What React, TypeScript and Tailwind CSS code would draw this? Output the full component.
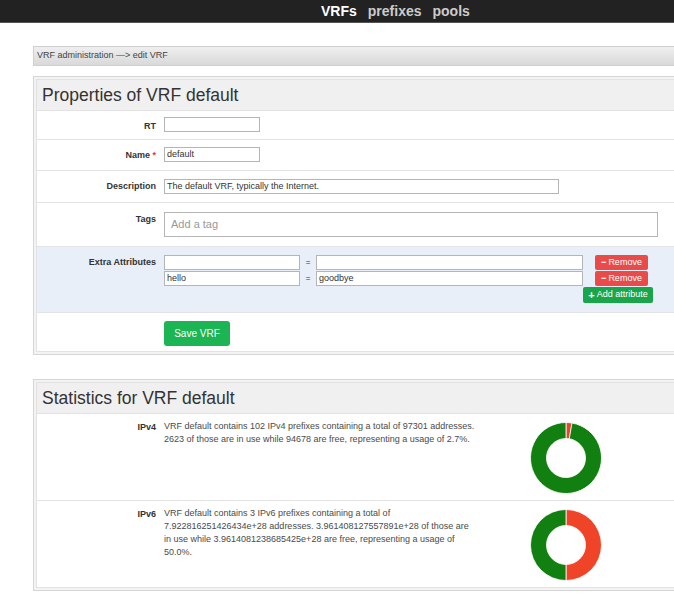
import React from 'react';

type Slice = { from: number; to: number; color: string };

function arcPath(cx: number, cy: number, r0: number, r1: number, a0: number, a1: number) {
  const pt = (r: number, a: number) => {
    const t = a * Math.PI * 2 - Math.PI / 2;
    return [cx + r * Math.cos(t), cy + r * Math.sin(t)];
  };
  const large = a1 - a0 > 0.5 ? 1 : 0;
  const [x0, y0] = pt(r1, a0);
  const [x1, y1] = pt(r1, a1);
  const [x2, y2] = pt(r0, a1);
  const [x3, y3] = pt(r0, a0);
  return `M${x0} ${y0} A${r1} ${r1} 0 ${large} 1 ${x1} ${y1} L${x2} ${y2} A${r0} ${r0} 0 ${large} 0 ${x3} ${y3} Z`;
}

function Donut({ slices }: { slices: Slice[] }) {
  return (
    <svg width="72" height="72" viewBox="0 0 72 72">
      {slices.map((s, i) => (
        <path key={i} d={arcPath(36, 36, 19.5, 35.5, s.from, s.to)} fill={s.color} stroke="#fff" strokeWidth="0.8" />
      ))}
    </svg>
  );
}

function Field({ className = '', value = '', placeholder }: { className?: string; value?: string; placeholder?: string }) {
  return (
    <div className={`border border-[#b5b5b5] bg-white flex items-center px-[2px] text-[9px] text-[#333] ${className}`}>
      {value ? value : <span className="text-[#999] text-[11px] pl-[4px]">{placeholder}</span>}
    </div>
  );
}

function Row({ label, children, className = '', labelClass = '' }: { label?: React.ReactNode; children: React.ReactNode; className?: string; labelClass?: string }) {
  return (
    <div className={`flex border-t border-[#e3e3e3] ${className}`}>
      <div className={`w-[119px] shrink-0 text-right text-[9px] font-bold text-[#333] ${labelClass}`}>{label}</div>
      <div className="pl-[8px] flex-1">{children}</div>
    </div>
  );
}

function Panel({ title, children }: { title: string; children: React.ReactNode }) {
  return (
    <div className="w-[660px] border border-[#d6d6d6] bg-[#f3f3f3] p-[2px]">
      <div className="border border-[#e2e2e2] bg-white">
        <div className="h-[31px] bg-[#f0f0f0] flex items-center pl-[5px] text-[17.5px] text-[#333]">{title}</div>
        {children}
      </div>
    </div>
  );
}

export default function App() {
  return (
    <div className="w-[674px] h-[600px] overflow-hidden bg-white font-['Liberation_Sans',Arial,sans-serif] text-[#333]">
      <div className="h-[23px] bg-[#222] border-b border-[#555] flex items-center pl-[321px] gap-[11px] text-[14px] font-bold">
        <span className="text-white">VRFs</span>
        <span className="text-[#ccc]">prefixes</span>
        <span className="text-[#ccc]">pools</span>
      </div>

      <div className="ml-[33px] mt-[23px]">
        <div className="w-[660px] h-[20px] bg-gradient-to-b from-[#efefef] to-[#d9d9d9] border border-[#d0d0d0] flex items-center pl-[3px] text-[9px] text-[#444]">
          VRF administration —&gt; edit VRF
        </div>

        <div className="mt-[10px]">
          <Panel title="Properties of VRF default">
            <div className="-mt-px">
              <Row label="RT" className="h-[29px] pt-[6px]" labelClass="pt-[3px]">
                <Field className="w-[96px] h-[15px]" />
              </Row>
              <Row
                label={<span>Name <span className="text-[#e33]">*</span></span>}
                className="h-[31px] pt-[7px]"
                labelClass="pt-[2px]"
              >
                <Field className="w-[96px] h-[15px]" value="default" />
              </Row>
              <Row label="Description" className="h-[32px] pt-[8px]" labelClass="pt-[1px]">
                <Field className="w-[395px] h-[15px]" value="The default VRF, typically the Internet." />
              </Row>
              <Row label="Tags" className="h-[44px] pt-[9px]" labelClass="pt-[1px]">
                <Field className="w-[494px] h-[25px]" placeholder="Add a tag" />
              </Row>
              <Row label="Extra Attributes" className="h-[66px] pt-[8px] bg-[#e8eff8]" labelClass="pt-[1px]">
                <div className="flex flex-col gap-[1px]">
                  {[['', ''], ['hello', 'goodbye']].map(([k, v], i) => (
                    <div key={i} className="flex items-center">
                      <Field className="w-[136px] h-[15px]" value={k} />
                      <span className="w-[16px] text-center text-[8px]">=</span>
                      <Field className="w-[267px] h-[15px]" value={v} />
                      <button className="ml-[12px] w-[53px] h-[15px] rounded-[2px] bg-[#e94b4b] text-white text-[9px] flex items-center justify-center gap-[2px]">
                        <span className="font-bold">−</span>Remove
                      </button>
                    </div>
                  ))}
                  <div className="pl-[419px]">
                    <button className="w-[70px] h-[16px] rounded-[2px] bg-[#19a64a] text-white text-[9px] flex items-center justify-center gap-[2px]">
                      <span className="font-bold text-[11px] leading-none">+</span>Add attribute
                    </button>
                  </div>
                </div>
              </Row>
              <Row className="h-[39px] pt-[7px]">
                <button className="w-[66px] h-[25px] rounded-[3px] bg-[#1bb554] text-white text-[10px]">Save VRF</button>
              </Row>
            </div>
          </Panel>
        </div>

        <div className="mt-[24px]">
          <Panel title="Statistics for VRF default">
            <div className="-mt-px">
              <Row label="IPv4" className="h-[87px]" labelClass="pt-[7px]">
                <div className="flex">
                  <div className="w-[312px] pt-[6px] text-[9px] leading-[13px] text-[#4a4a4a]">
                    VRF default contains 102 IPv4 prefixes containing a total of 97301 addresses. 2623 of those are in use while 94678 are free, representing a usage of 2.7%.
                  </div>
                  <div className="ml-[54px] pt-[8px]">
                    <Donut
                      slices={[
                        { from: 0, to: 0.027, color: '#e8452c' },
                        { from: 0.027, to: 1, color: '#118011' },
                      ]}
                    />
                  </div>
                </div>
              </Row>
              <Row label="IPv6" className="h-[87px]" labelClass="pt-[7px]">
                <div className="flex">
                  <div className="w-[312px] pt-[6px] text-[9px] leading-[13px] text-[#4a4a4a]">
                    VRF default contains 3 IPv6 prefixes containing a total of 7.922816251426434e+28 addresses. 3.961408127557891e+28 of those are in use while 3.9614081238685425e+28 are free, representing a usage of 50.0%.
                  </div>
                  <div className="ml-[54px] pt-[8px]">
                    <Donut
                      slices={[
                        { from: 0, to: 0.5, color: '#f04428' },
                        { from: 0.5, to: 1, color: '#118011' },
                      ]}
                    />
                  </div>
                </div>
              </Row>
            </div>
          </Panel>
        </div>
      </div>
    </div>
  );
}
